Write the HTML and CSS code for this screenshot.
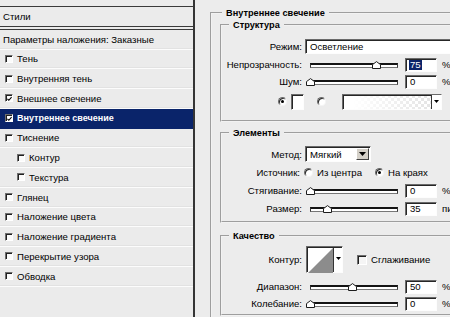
FILE: index.html
```html
<!DOCTYPE html>
<html lang="ru">
<head>
<meta charset="utf-8">
<title>Стиль слоя</title>
<link rel="stylesheet" href="styles.css">
</head>
<body>
<div class="app">
  <aside class="styles-panel">
    <div class="styles-head">Стили</div>
    <ul class="style-list">
      <li class="row first">Параметры наложения: Заказные</li>
      <li class="row"><span class="cb"></span>Тень</li>
      <li class="row"><span class="cb"></span>Внутренняя тень</li>
      <li class="row"><span class="cb"><svg viewBox="0 0 6 6" width="6" height="6"><path d="M0.5 2.8 L2.2 4.5 L5.5 0.8" fill="none" stroke="#000" stroke-width="1.3"/></svg></span>Внешнее свечение</li>
      <li class="row selected"><span class="cb"><svg viewBox="0 0 6 6" width="6" height="6"><path d="M0.5 2.8 L2.2 4.5 L5.5 0.8" fill="none" stroke="#000" stroke-width="1.3"/></svg></span>Внутреннее свечение</li>
      <li class="row"><span class="cb"></span>Тиснение</li>
      <li class="row sub"><span class="cb"></span>Контур</li>
      <li class="row sub"><span class="cb"></span>Текстура</li>
      <li class="row"><span class="cb"></span>Глянец</li>
      <li class="row"><span class="cb"></span>Наложение цвета</li>
      <li class="row"><span class="cb"></span>Наложение градиента</li>
      <li class="row"><span class="cb"></span>Перекрытие узора</li>
      <li class="row"><span class="cb"></span>Обводка</li>
    </ul>
  </aside>

  <main class="options">
    <fieldset class="group outer">
      <legend>Внутреннее свечение</legend>

      <fieldset class="group inner g-structure">
        <legend>Структура</legend>
        <div class="frow fr-mode">
          <span class="lbl">Режим:</span>
          <div class="field wide">Осветление</div>
        </div>
        <div class="frow fr-opacity">
          <span class="lbl">Непрозрачность:</span>
          <div class="slider"><div class="track"></div><svg class="thumb" style="left:66.5px" viewBox="0 0 9 8" width="9" height="8"><path d="M0.5 7.5V3.6L4.5 0.6L8.5 3.6V7.5Z" fill="#fff" stroke="#1c1c1c"/></svg></div>
          <div class="num"><span class="sel">75</span></div>
          <span class="unit">%</span>
        </div>
        <div class="frow fr-noise">
          <span class="lbl">Шум:</span>
          <div class="slider"><div class="track"></div><svg class="thumb" style="left:0.5px" viewBox="0 0 9 8" width="9" height="8"><path d="M0.5 7.5V3.6L4.5 0.6L8.5 3.6V7.5Z" fill="#fff" stroke="#1c1c1c"/></svg></div>
          <div class="num">0</div>
          <span class="unit">%</span>
        </div>
        <div class="frow fr-color">
          <span class="radio on"></span>
          <span class="swatch"></span>
          <span class="radio r2"></span>
          <div class="gradient"><span class="dd"><svg viewBox="0 0 5 3" width="5" height="3"><path d="M0 0H5L2.5 3Z"/></svg></span></div>
        </div>
      </fieldset>

      <fieldset class="group inner g-elements">
        <legend>Элементы</legend>
        <div class="frow fr-method">
          <span class="lbl">Метод:</span>
          <div class="select">Мягкий<span class="btn"><svg viewBox="0 0 7 4" width="7" height="4"><path d="M0 0H7L3.5 4Z"/></svg></span></div>
        </div>
        <div class="frow fr-source">
          <span class="lbl">Источник:</span>
          <span class="radio"></span><span class="rtext">Из центра</span>
          <span class="radio on r-edge"></span><span class="rtext">На краях</span>
        </div>
        <div class="frow fr-choke">
          <span class="lbl">Стягивание:</span>
          <div class="slider"><div class="track"></div><svg class="thumb" style="left:0.5px" viewBox="0 0 9 8" width="9" height="8"><path d="M0.5 7.5V3.6L4.5 0.6L8.5 3.6V7.5Z" fill="#fff" stroke="#1c1c1c"/></svg></div>
          <div class="num">0</div>
          <span class="unit">%</span>
        </div>
        <div class="frow fr-size">
          <span class="lbl">Размер:</span>
          <div class="slider"><div class="track"></div><svg class="thumb" style="left:17.5px" viewBox="0 0 9 8" width="9" height="8"><path d="M0.5 7.5V3.6L4.5 0.6L8.5 3.6V7.5Z" fill="#fff" stroke="#1c1c1c"/></svg></div>
          <div class="num">35</div>
          <span class="unit">пикс.</span>
        </div>
      </fieldset>

      <fieldset class="group inner g-quality">
        <legend>Качество</legend>
        <div class="frow fr-contour">
          <span class="lbl">Контур:</span>
          <div class="contour">
            <svg class="contour-img" viewBox="0 0 25 25" width="25" height="25"><rect width="25" height="25" fill="#fff"/><path d="M0 25L25 0V25Z" fill="#8c8c8c"/></svg>
            <span class="cdd"><svg viewBox="0 0 5 3" width="5" height="3"><path d="M0 0H5L2.5 3Z"/></svg></span>
          </div>
          <span class="cb big"></span><span class="rtext">Сглаживание</span>
        </div>
        <div class="frow fr-range">
          <span class="lbl">Диапазон:</span>
          <div class="slider"><div class="track"></div><svg class="thumb" style="left:42.5px" viewBox="0 0 9 8" width="9" height="8"><path d="M0.5 7.5V3.6L4.5 0.6L8.5 3.6V7.5Z" fill="#fff" stroke="#1c1c1c"/></svg></div>
          <div class="num">50</div>
          <span class="unit">%</span>
        </div>
        <div class="frow fr-jitter">
          <span class="lbl">Колебание:</span>
          <div class="slider"><div class="track"></div><svg class="thumb" style="left:0.5px" viewBox="0 0 9 8" width="9" height="8"><path d="M0.5 7.5V3.6L4.5 0.6L8.5 3.6V7.5Z" fill="#fff" stroke="#1c1c1c"/></svg></div>
          <div class="num">0</div>
          <span class="unit">%</span>
        </div>
      </fieldset>
    </fieldset>
  </main>
</div>
</body>
</html>
```

FILE: styles.css
```css
* { box-sizing: border-box; }
html, body { margin: 0; padding: 0; }
body {
  width: 450px;
  height: 317px;
  overflow: hidden;
  background: #ececec;
  font-family: "Liberation Sans", Arial, sans-serif;
  font-size: 9.6px;
  color: #000;
}
.app { display: flex; height: 317px; }

/* ---------- left list ---------- */
.styles-panel {
  flex: none;
  width: 195px;
  height: 317px;
  padding-top: 6px;
  border-right: 2px solid #353535;
  background: #ebebeb;
}
.styles-head {
  height: 21px;
  line-height: 19px;
  padding-left: 3px;
  border-top: 1px solid #3a3a3a;
  border-bottom: 1px solid #3a3a3a;
}
.style-list {
  list-style: none;
  margin: 2px 0 0;
  padding: 0;
  border-top: 1px solid #3a3a3a;
}
.row {
  display: flex;
  align-items: center;
  height: 19.75px;
  padding-left: 5px;
  border-bottom: 1px solid #fcfcfc;
  box-shadow: inset 0 -1px 0 #e2e2e2;
  white-space: nowrap;
}
.row.first { height: 19.5px; padding-left: 3px; }
.row.sub { padding-left: 17px; }
.row.selected {
  background: #0a246a;
  color: #fff;
  font-weight: bold;
  font-size: 9px;
  box-shadow: none;
  border-bottom-color: #0a246a;
}
.cb {
  flex: none;
  display: flex;
  align-items: center;
  justify-content: center;
  width: 8px;
  height: 8px;
  margin-right: 4px;
  background: #fbfbfb;
  border: 1px solid;
  border-color: #6e6e6e #fff #fff #6e6e6e;
  box-shadow: inset 1px 1px 0 #202020;
}
.cb svg { margin: 1px 0 0 1px; }
.selected .cb { background: #fff; }

/* ---------- right options ---------- */
.options {
  flex: none;
  width: 280px;
  padding: 7px 0 0 15px;
}
.group {
  margin: 0;
  padding: 0;
  min-width: 0;
  border: 2px groove #f2f2f2;
}
.group > legend {
  padding: 0 4px;
  font-weight: bold;
  font-size: 9.2px;
  line-height: 12px;
  white-space: nowrap;
}
.outer { width: 262px; height: 330px; }
.outer > legend { margin-left: 10px; }
.inner { margin-left: 8px; margin-right: 4px; }
.inner > legend { margin-left: 7px; }

.g-structure { padding: 8px 0 10px; }
.g-elements { margin-top: 5px; padding: 7px 0 5px; }
.g-quality { margin-top: 7px; padding: 4px 0 3px; }

.frow {
  display: flex;
  align-items: center;
  height: 15px;
  white-space: nowrap;
}
.lbl {
  flex: none;
  width: 80px;
  margin-right: 3px;
  text-align: right;
}
.fr-opacity { margin-top: 3px; }
.fr-noise { margin-top: 2px; }
.fr-color { margin-top: 4px; height: 17px; padding-left: 56px; }
.fr-method { height: 16px; }
.fr-source { margin-top: 2px; height: 16px; }
.fr-choke { margin-top: 3px; }
.fr-size { margin-top: 3px; }
.fr-contour { height: 27px; }
.fr-range { margin-top: 6px; }
.fr-jitter { margin-top: 2px; }

.field, .num, .select, .gradient, .contour, .swatch {
  flex: none;
  background: #fff;
  border: 1px solid;
  border-color: #6a6a6a #fdfdfd #fdfdfd #6a6a6a;
  box-shadow: inset 1px 1px 0 #262626;
}
.field.wide {
  width: 160px;
  height: 15px;
  line-height: 13px;
  padding-left: 4px;
}
.num {
  width: 32px;
  height: 14px;
  margin-left: 5px;
  padding-left: 4px;
  line-height: 12px;
}
.sel {
  display: inline-block;
  background: #0a246a;
  color: #fff;
  line-height: 10px;
  padding: 0 1px;
  margin-left: -1px;
}
.unit { margin-left: 5px; }

.slider {
  position: relative;
  flex: none;
  width: 95px;
  height: 100%;
  display: flex;
  align-items: center;
}
.track {
  width: 88px;
  height: 5px;
  margin-left: 5px;
  margin-top: 2px;
  background: #fff;
  border: 1px solid #3a3a3a;
  border-top: 2px solid #141414;
  border-bottom-color: #777;
}
.thumb {
  position: absolute;
  top: 4px;
  display: block;
}

.radio {
  flex: none;
  position: relative;
  width: 9px;
  height: 9px;
  border-radius: 50%;
  background: #fff;
  border: 1px solid;
  border-color: #6a6a6a #f4f4f4 #f4f4f4 #6a6a6a;
  box-shadow: inset 1px 1px 0 #2a2a2a;
}
.radio.on::after {
  content: "";
  position: absolute;
  left: 2px;
  top: 2px;
  width: 3px;
  height: 3px;
  border-radius: 50%;
  background: #000;
}
.swatch {
  width: 13px;
  height: 16px;
  margin-left: 4px;
}
.r2 { margin-left: 13px; }
.gradient {
  width: 100px;
  height: 16px;
  margin-left: 16px;
  display: flex;
  justify-content: flex-end;
  background:
    linear-gradient(to right, #fff 10%, rgba(255,255,255,0) 95%),
    repeating-conic-gradient(#e2e2e2 0 25%, #fff 0 50%) 0 0 / 6px 6px;
}
.dd, .cdd {
  display: flex;
  align-items: center;
  justify-content: center;
  width: 10px;
  background: #fff;
  border-left: 1px solid #333;
}

.select {
  display: flex;
  align-items: center;
  justify-content: space-between;
  width: 66px;
  height: 16px;
  padding: 0 1px 0 4px;
}
.select .btn {
  display: flex;
  align-items: center;
  justify-content: center;
  width: 13px;
  height: 12px;
  background: #d4d0c8;
  border: 1px solid;
  border-color: #fff #404040 #404040 #fff;
}
.rtext { margin-left: 4px; }
.r-edge { margin-left: 13px; }
.fr-source .lbl { margin-right: 4px; width: 78px; }

.contour {
  display: flex;
  width: 37px;
  height: 27px;
  margin-left: 1px;
  padding: 1px 0 0 1px;
}
.contour-img { display: block; flex: none; }
.cdd { align-items: flex-start; padding-top: 9px; }
.cb.big {
  width: 10px;
  height: 10px;
  margin: 0 0 0 14px;
  background: #f5f5f5;
}
.cb.big + .rtext { margin-left: 4px; }
```
